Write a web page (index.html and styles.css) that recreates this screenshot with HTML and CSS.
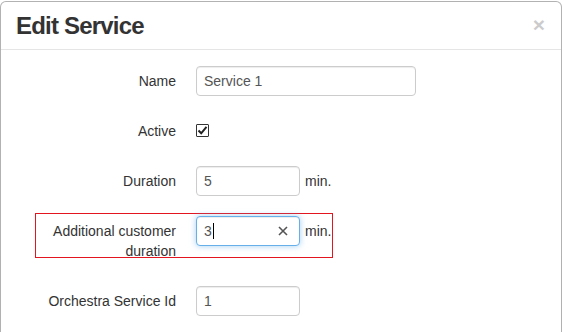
FILE: index.html
```html
<!DOCTYPE html>
<html lang="en">
<head>
  <meta charset="UTF-8" />
  <title>Edit Service</title>
  <link rel="stylesheet" href="styles.css">
</head>
<body>
  <div class="modal">
    <div class="modal-header">
      <h4 class="modal-title">Edit Service</h4>
      <span class="close">&times;</span>
    </div>

    <div class="modal-body">
      <div class="form-group">
        <label class="control-label">Name</label>
        <input class="form-control wide" type="text" value="Service 1">
      </div>

      <div class="form-group">
        <label class="control-label">Active</label>
        <span class="checkbox">
          <svg width="11" height="11" viewBox="0 0 11 11">
            <path d="M1.5 5.5 L4.2 8.3 L9.5 1.8" fill="none" stroke="#222" stroke-width="2"/>
          </svg>
        </span>
      </div>

      <div class="form-group">
        <label class="control-label">Duration</label>
        <input class="form-control" type="text" value="5">
        <span class="unit">min.</span>
      </div>

      <!-- highlighted row, currently being edited -->
      <div class="form-group highlight">
        <label class="control-label">Additional customer duration</label>
        <div class="form-control focused">
          <span class="value">3</span><span class="caret"></span>
          <svg class="clear" width="10" height="10" viewBox="0 0 10 10">
            <path d="M1 1 L9 9 M9 1 L1 9" stroke="#555" stroke-width="1.6"/>
          </svg>
        </div>
        <span class="unit">min.</span>
      </div>

      <div class="form-group">
        <label class="control-label">Orchestra Service Id</label>
        <input class="form-control" type="text" value="1">
      </div>
    </div>
  </div>
</body>
</html>
```

FILE: styles.css
```css
body {
  margin: 0;
  background-color: #ffffff;
  font-family: 'Liberation Sans', Arial, sans-serif;
  font-size: 14px;
  color: #333;
}

.modal {
  margin-top: 1px;
  width: 562px;
  height: 331px;
  box-sizing: border-box;
  border: 1px solid rgba(0, 0, 0, 0.3);
  border-bottom: none;
  border-radius: 6px 6px 0 0;
  background-color: #fff;
  overflow: hidden;
}

.modal-header {
  height: 47px;
  padding: 0 16px 0 15px;
  border-bottom: 1px solid #e5e5e5;
  display: flex;
  align-items: center;
  justify-content: space-between;
}

.modal-title {
  margin: 0;
  font-size: 24px;
  line-height: 26px;
  font-weight: bold;
  letter-spacing: -0.8px;
  color: #333;
}

.close {
  font-size: 21px;
  font-weight: bold;
  line-height: 1;
  color: #000;
  opacity: 0.2;
  margin-top: -2px;
}

.modal-body {
  padding: 16px 0 0 34px;
}

.form-group {
  display: flex;
  align-items: flex-start;
  min-height: 30px;
  margin-bottom: 20px;
}

.control-label {
  width: 141px;
  margin-right: 20px;
  padding-top: 5px;
  line-height: 20px;
  text-align: right;
}

.form-control {
  box-sizing: border-box;
  width: 104px;
  height: 30px;
  margin: 0;
  padding: 0 7px;
  border: 1px solid #ccc;
  border-radius: 4px;
  box-shadow: inset 0 1px 1px rgba(0, 0, 0, 0.075);
  font-family: inherit;
  font-size: 14px;
  color: #555;
  background-color: #fff;
}

.form-control.wide {
  width: 220px;
}

.form-control.focused {
  display: flex;
  align-items: center;
  border-color: #66afe9;
  box-shadow: inset 0 1px 1px rgba(0, 0, 0, 0.075), 0 0 6px rgba(102, 175, 233, 0.6);
}

.caret {
  width: 1px;
  height: 16px;
  margin-left: 1px;
  background-color: #000;
}

.clear {
  margin-left: auto;
  margin-right: 4px;
}

.unit {
  margin-left: 5px;
  line-height: 30px;
}

.checkbox {
  box-sizing: border-box;
  width: 13px;
  height: 13px;
  margin-top: 8px;
  border: 1px solid #333;
  border-radius: 1px;
  display: flex;
  align-items: center;
  justify-content: center;
}

.highlight {
  box-sizing: border-box;
  width: 298px;
  height: 45px;
  margin-top: -3px;
  margin-bottom: 28px;
  padding-top: 2px;
  border: 1px solid #e3151f;
}

.highlight .control-label {
  width: 140px;
}
```
